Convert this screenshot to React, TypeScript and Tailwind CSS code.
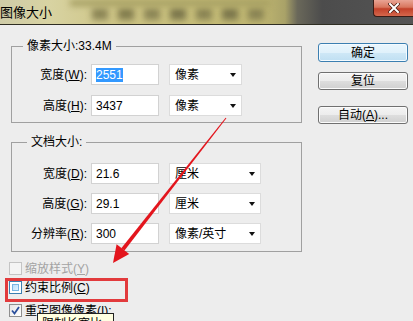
import React from "react"

const font = "font-['Liberation_Sans','Noto_Sans_CJK_SC',sans-serif]"

const Select = ({ value, w }: { value: string; w: string }) => (
  <div className={`${w} h-[21px] ml-[10px] flex items-center justify-between bg-white border border-[#dcdcdc] pl-[5px] pr-[5px]`}>
    <span>{value}</span>
    <span className="w-0 h-0 border-x-[3.5px] border-x-transparent border-t-[4px] border-t-[#111]" />
  </div>
)

const Row = ({ label, mn, value, unit, w, sel, className = "" }: { label: string; mn: string; value: string; unit: string; w: string; sel?: boolean; className?: string }) => (
  <div className={`flex items-center h-[21px] ${className}`}>
    <div className="w-[75px] text-right">
      {label}(<u>{mn}</u>):
    </div>
    <div className="w-[68px] h-[21px] ml-[4px] flex items-center bg-white border border-[#d2d2d2] pl-[4px]">
      {sel ? <span className="bg-[#3399ff] text-white leading-[14px]">{value}</span> : <span>{value}</span>}
    </div>
    <Select value={unit} w={w} />
  </div>
)

const Check = ({ state }: { state: "off" | "hover" | "on" | "disabled" }) => {
  if (state === "disabled")
    return <span className="w-[13px] h-[13px] border border-[#c4c4c4] bg-[#f4f4f4]" />
  if (state === "hover")
    return (
      <span className="w-[13px] h-[13px] border border-[#3c7fb1] bg-white p-[2px]">
        <span className="block w-full h-full bg-[linear-gradient(135deg,#b9dffc,#e3f3fe)] border border-[#79b6e3]" />
      </span>
    )
  if (state === "on")
    return (
      <span className="w-[13px] h-[13px] border border-[#8f8f8f] bg-[linear-gradient(135deg,#e6e6e6,#ffffff)] flex items-center justify-center">
        <svg width="9" height="9" viewBox="0 0 9 9">
          <path d="M1 4.5 L3.5 7.5 L8 1" fill="none" stroke="#2a4f9c" strokeWidth="1.8" />
        </svg>
      </span>
    )
  return <span className="w-[13px] h-[13px] border border-[#8f8f8f] bg-white" />
}

const Button = ({ children, primary, className = "" }: { children: React.ReactNode; primary?: boolean; className?: string }) => (
  <div
    className={`w-[90px] flex items-center justify-center rounded-[3px] border ${
      primary
        ? "h-[19px] border-[#3c7fb1] bg-[linear-gradient(#eaf6fd,#e0f1fb_50%,#cfe8f7_50%,#bfdff2)] shadow-[inset_0_0_0_1px_#f4fbff]"
        : "h-[18px] border-[#707070] bg-[linear-gradient(#f4f4f4,#ececec_50%,#dedede_50%,#d0d0d0)] shadow-[inset_0_0_0_1px_#fbfbfb]"
    } ${className}`}
  >
    {children}
  </div>
)

export default function App() {
  return (
    <div className={`relative w-[413px] h-[321px] overflow-hidden bg-[#ededed] text-[12px] leading-[16px] text-black ${font}`}>
      {/* title bar */}
      <div className="relative h-[25px] border-b border-[#2e2d22] bg-[linear-gradient(90deg,#cfcca8_0%,#d8d3a2_12%,#cdc485_28%,#c6bd78_50%,#bdb470_64%,#a9a268_69%,#6a685a_72%,#4c4c4c_78%,#545454_100%)] overflow-hidden">
        <div className="absolute left-[92px] top-[8px] flex gap-[10px] blur-[3px]">
          <div className="w-[16px] h-[12px] bg-[#8c8656]" />
          <div className="w-[16px] h-[12px] bg-[#837d4e]" />
          <div className="w-[16px] h-[12px] bg-[#8c8656]" />
          <div className="w-[16px] h-[12px] bg-[#7c774c]" />
          <div className="w-[16px] h-[12px] bg-[#8a8454]" />
          <div className="w-[16px] h-[12px] bg-[#7c774c]" />
          <div className="w-[16px] h-[12px] bg-[#8a8454]" />
        </div>
        <div className="absolute left-[70px] top-0 w-[200px] h-[6px] blur-[3px] bg-[#a59e62]" />
        <div className="relative pt-[4px] text-[13px] leading-[17px]">图像大小</div>
        <div className="absolute right-0 top-0 w-[40px] h-[17px] rounded-bl-[4px] border-l border-b border-[#3a1c16] bg-[linear-gradient(#e9a494,#d8765e_45%,#c2412a_55%,#d4674c)] flex items-center justify-center">
          <svg width="12" height="10" viewBox="0 0 12 10">
            <path d="M2 1 L10 9 M10 1 L2 9" stroke="#4a1a12" strokeWidth="3.4" strokeLinecap="square" />
            <path d="M2 1 L10 9 M10 1 L2 9" stroke="#ffffff" strokeWidth="2" strokeLinecap="square" />
          </svg>
        </div>
      </div>

      <div className="flex">
        {/* left column */}
        <div className="w-[302px] pl-[9px] pt-[13px]">
          <fieldset className="ml-[2px] border border-[#a0a0a0] pb-[6px]">
            <legend className="ml-[11px] px-[4px]">像素大小:33.4M</legend>
            <div className="pt-[10px]">
              <Row label="宽度" mn="W" value="2551" unit="像素" w="w-[73px]" sel />
              <Row label="高度" mn="H" value="3437" unit="像素" w="w-[73px]" className="mt-[10px]" />
            </div>
          </fieldset>

          <fieldset className="ml-[2px] mt-[11px] border border-[#a0a0a0] pb-[7px]">
            <legend className="ml-[15px] px-[4px]">文档大小:</legend>
            <div className="pt-[13px]">
              <Row label="宽度" mn="D" value="21.6" unit="厘米" w="w-[92px]" />
              <Row label="高度" mn="G" value="29.1" unit="厘米" w="w-[92px]" className="mt-[9px]" />
              <Row label="分辨率" mn="R" value="300" unit="像素/英寸" w="w-[92px]" className="mt-[9px]" />
            </div>
          </fieldset>

          <div className="mt-[10px] flex items-center gap-[3px] h-[13px] text-[#a3a3a3]">
            <Check state="disabled" />
            <span>缩放样式(<u>Y</u>)</span>
          </div>
          <div className="mt-[6px] flex items-center gap-[3px] h-[13px]">
            <Check state="hover" />
            <span>约束比例(<u>C</u>)</span>
          </div>
          <div className="mt-[10px] flex items-center gap-[3px] h-[13px]">
            <Check state="on" />
            <span>重定图像像素(<u>I</u>):</span>
          </div>
        </div>

        {/* right column */}
        <div className="pl-[16px] pt-[18px] flex flex-col">
          <Button primary>确定</Button>
          <Button className="mt-[10px]">复位</Button>
          <Button className="mt-[16px]">
            自动(<u>A</u>)...
          </Button>
        </div>
      </div>

      {/* annotation: red box */}
      <div className="absolute left-[5px] top-[278px] w-[123px] h-[24px] border-[3px] border-[#e23a3c]" />

      {/* tooltip */}
      <div className="absolute left-[37px] top-[313px] w-[77px] h-[20px] bg-[#ffffe1] border border-[#222] pl-[4px] pt-[2px]">
        限制长宽比
      </div>

      {/* annotation: red arrow */}
      <svg className="absolute left-0 top-0 pointer-events-none" width="413" height="321" viewBox="0 0 413 321">
        <polygon points="226.4,118.3 225.6,117.7 121.3,248.2 124.5,250.6" fill="#e3151d" />
        <polygon points="113,263 116.6,244.3 129.2,254.1" fill="#e3151d" />
      </svg>
    </div>
  )
}
